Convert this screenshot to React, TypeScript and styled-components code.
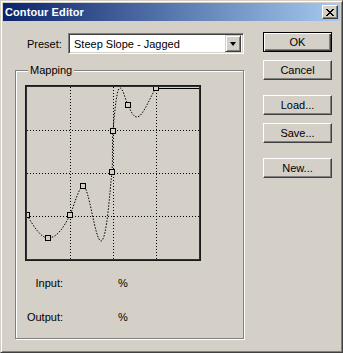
import React from "react";
import styled, { createGlobalStyle } from "styled-components";

const Global = createGlobalStyle`
  html, body { margin: 0; padding: 0; background: #d4d0c8; }
  body { font-family: "Liberation Sans", Arial, sans-serif; font-size: 11px; color: #000; }
  * { box-sizing: border-box; }
`;

const Window = styled.div`
  width: 343px;
  height: 353px;
  background: #d4d0c8;
  border: 1px solid;
  border-color: #d4d0c8 #404040 #404040 #d4d0c8;
  box-shadow: inset 1px 1px #fff, inset -1px -1px #808080;
  padding: 2px;
  display: flex;
  flex-direction: column;
`;

const TitleBar = styled.div`
  height: 18px;
  display: flex;
  align-items: center;
  justify-content: space-between;
  padding: 0 2px 0 2px;
  background: linear-gradient(to right, #0a246a, #a6caf0);
`;

const Title = styled.span`
  color: #fff;
  font-weight: bold;
  font-size: 11px;
  letter-spacing: 0.1px;
`;

const CloseBtn = styled.div`
  width: 16px;
  height: 14px;
  background: #d4d0c8;
  border: 1px solid;
  border-color: #fff #404040 #404040 #fff;
  box-shadow: inset -1px -1px #808080;
  display: flex;
  align-items: center;
  justify-content: center;
`;

const Body = styled.div`
  display: flex;
  padding: 11px 0 0 12px;
  gap: 19px;
`;

const LeftCol = styled.div`
  width: 229px;
  padding-top: 1px;
  display: flex;
  flex-direction: column;
`;

const PresetRow = styled.div`
  display: flex;
  align-items: center;
  height: 21px;
  padding-left: 12px;
`;

const Label = styled.span`
  width: 41px;
  flex: none;
`;

const Combo = styled.div`
  flex: 1;
  height: 21px;
  background: #fff;
  border: 1px solid;
  border-color: #808080 #fff #fff #808080;
  box-shadow: inset 1px 1px #404040, inset -1px -1px #d4d0c8;
  display: flex;
  align-items: center;
  padding: 2px;
`;

const ComboText = styled.span`
  flex: 1;
  padding-left: 3px;
`;

const ArrowBtn = styled.div`
  width: 16px;
  height: 17px;
  background: #d4d0c8;
  border: 1px solid;
  border-color: #d4d0c8 #404040 #404040 #d4d0c8;
  box-shadow: inset 1px 1px #fff, inset -1px -1px #808080;
  display: flex;
  align-items: center;
  justify-content: center;
`;

const Triangle = styled.div`
  width: 0;
  height: 0;
  border-left: 3.5px solid transparent;
  border-right: 3.5px solid transparent;
  border-top: 4px solid #000;
`;

const Group = styled.div`
  margin-top: 9px;
  display: flex;
  flex-direction: column;
`;

const LegendRow = styled.div`
  display: flex;
  align-items: center;
  height: 14px;
  margin-bottom: -7px;
  position: relative;
  z-index: 1;
  padding-left: 13px;
`;

const Legend = styled.span`
  padding: 0 2px;
  background: #d4d0c8;
  line-height: 14px;
`;

const Frame = styled.div`
  height: 269px;
  border: 1px solid #808080;
  box-shadow: inset 1px 1px #fff, 1px 1px #fff;
  padding-top: 14px;
`;

const Graph = styled.div`
  width: 176px;
  height: 176px;
  margin-left: 9px;
  border: 1px solid #1a1a1a;
  box-shadow: inset 1px 1px #303030, inset -1px -1px #303030;
  padding: 1px;
  background: #d4d0c8;
  svg { display: block; }
`;

const Readout = styled.div`
  display: grid;
  grid-template-columns: 47px 55px auto;
  grid-auto-rows: 14px;
  row-gap: 20px;
  margin-top: 15px;
  line-height: 14px;
`;

const ReadLabel = styled.span`
  text-align: right;
`;

const RightCol = styled.div`
  width: 69px;
  display: flex;
  flex-direction: column;
`;

const Button = styled.div<{ $def?: boolean; $mt: number }>`
  height: 20px;
  margin-top: ${(p) => p.$mt}px;
  background: #d4d0c8;
  display: flex;
  align-items: center;
  justify-content: center;
  border: 1px solid;
  border-color: ${(p) => (p.$def ? "#000" : "#fff #404040 #404040 #fff")};
  box-shadow: ${(p) =>
    p.$def
      ? "inset 1px 1px #fff, inset -1px -1px #404040, inset -2px -2px #808080"
      : "inset -1px -1px #808080, inset 1px 1px #d4d0c8"};
`;

const pts: [number, number][] = [
  [0, 128],
  [21, 151],
  [43, 128],
  [56, 99],
  [85, 85],
  [86, 44],
  [101, 18],
  [129, 1],
];

const curve =
  "M0,128 C7,140 14,151 21,151 C30,151 37,140 43,128 C48,116 52,100 56,99 " +
  "C62,98 68,154 74,154 C80,154 83,100 85,85 C86,70 85,55 86,44 " +
  "C88,20 90,1 93,1 C96,1 98,12 101,18 C104,24 106,30 110,30 C116,30 124,8 129,1";

export default function App() {
  const grid = [43, 86, 129];
  return (
    <>
      <Global />
      <Window>
        <TitleBar>
          <Title>Contour Editor</Title>
          <CloseBtn>
            <svg width="8" height="7" viewBox="0 0 8 7" shapeRendering="crispEdges">
              <path d="M0,0h2v1h-2zM6,0h2v1h-2zM1,1h2v1h-2zM5,1h2v1h-2zM2,2h4v1h-4zM3,3h2v1h-2zM2,4h4v1h-4zM1,5h2v1h-2zM5,5h2v1h-2zM0,6h2v1h-2zM6,6h2v1h-2z" fill="#000" />
            </svg>
          </CloseBtn>
        </TitleBar>
        <Body>
          <LeftCol>
            <PresetRow>
              <Label>Preset:</Label>
              <Combo>
                <ComboText>Steep Slope - Jagged</ComboText>
                <ArrowBtn>
                  <Triangle />
                </ArrowBtn>
              </Combo>
            </PresetRow>
            <Group>
              <LegendRow>
                <Legend>Mapping</Legend>
              </LegendRow>
              <Frame>
                <Graph>
                  <svg width="172" height="172" viewBox="0 0 172 172">
                    {grid.map((g) => (
                      <g key={g}>
                        <line x1={g + 0.5} y1="0" x2={g + 0.5} y2="172" stroke="#000" strokeDasharray="1 2" shapeRendering="crispEdges" />
                        <line x1="0" y1={g + 0.5} x2="172" y2={g + 0.5} stroke="#000" strokeDasharray="1 2" shapeRendering="crispEdges" />
                      </g>
                    ))}
                    <path d={curve} fill="none" stroke="#000" strokeWidth="1" strokeDasharray="1.5 1.5" />
                    <line x1="129" y1="1.5" x2="172" y2="1.5" stroke="#000" shapeRendering="crispEdges" />
                    {pts.map(([x, y], i) => (
                      <rect key={i} x={x - 2.5} y={y - 2.5} width="5" height="5" fill="#d4d0c8" stroke="#000" strokeWidth="1" shapeRendering="crispEdges" />
                    ))}
                  </svg>
                </Graph>
                <Readout>
                  <ReadLabel>Input:</ReadLabel>
                  <span />
                  <span>%</span>
                  <ReadLabel>Output:</ReadLabel>
                  <span />
                  <span>%</span>
                </Readout>
              </Frame>
            </Group>
          </LeftCol>
          <RightCol>
            <Button $def $mt={0}>OK</Button>
            <Button $mt={8}>Cancel</Button>
            <Button $mt={15}>Load...</Button>
            <Button $mt={8}>Save...</Button>
            <Button $mt={15}>New...</Button>
          </RightCol>
        </Body>
      </Window>
    </>
  );
}
